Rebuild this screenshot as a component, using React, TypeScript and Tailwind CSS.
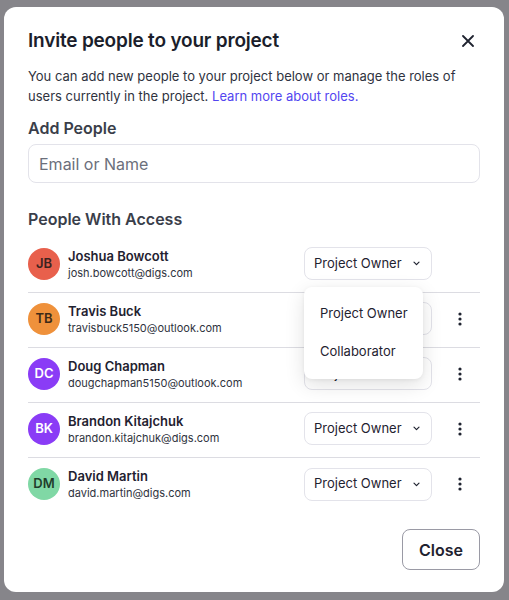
import React from "react";

const people = [
  { initials: "JB", name: "Joshua Bowcott", email: "josh.bowcott@digs.com", bg: "bg-[#e8604c]", fg: "text-[#3b2320]", owner: true },
  { initials: "TB", name: "Travis Buck", email: "travisbuck5150@outlook.com", bg: "bg-[#ef913b]", fg: "text-[#3d2a17]", owner: false },
  { initials: "DC", name: "Doug Chapman", email: "dougchapman5150@outlook.com", bg: "bg-[#8a3cf6]", fg: "text-white", owner: false },
  { initials: "BK", name: "Brandon Kitajchuk", email: "brandon.kitajchuk@digs.com", bg: "bg-[#8a3cf6]", fg: "text-white", owner: false },
  { initials: "DM", name: "David Martin", email: "david.martin@digs.com", bg: "bg-[#80d8a5]", fg: "text-[#1f3d2c]", owner: false },
];

function Chevron() {
  return (
    <svg width="7" height="5" viewBox="0 0 7 5" fill="none">
      <path d="M1 1.2l2.5 2.5L6 1.2" stroke="#1f2330" strokeWidth="1.2" strokeLinecap="round" strokeLinejoin="round" />
    </svg>
  );
}

function Kebab() {
  return (
    <svg width="4" height="14" viewBox="0 0 4 14" fill="#1f2330">
      <circle cx="2" cy="2" r="1.6" />
      <circle cx="2" cy="7" r="1.6" />
      <circle cx="2" cy="12" r="1.6" />
    </svg>
  );
}

export default function App() {
  return (
    <div
      className="min-h-screen w-full bg-[#86858a] pt-[7px] px-[4px]"
      style={{ fontFamily: "Inter, 'Noto Sans', sans-serif" }}
    >
      <div className="relative w-[500px] rounded-xl bg-white px-6 pt-5 pb-[22px]">
        <div className="flex items-center justify-between">
          <h1 className="text-[19px] leading-7 font-semibold text-[#1b1e2b] tracking-[-0.01em]">
            Invite people to your project
          </h1>
          <button className="w-6 h-6 flex items-center justify-center">
            <svg width="12" height="12" viewBox="0 0 12 12" fill="none">
              <path d="M1 1l10 10M11 1L1 11" stroke="#1f2330" strokeWidth="1.8" strokeLinecap="round" />
            </svg>
          </button>
        </div>
        <p className="mt-[11px] text-[13px] leading-5 text-[#2f3340]">
          You can add new people to your project below or manage the roles of users currently in the project.{" "}
          <span className="text-[#5346f0]">Learn more about roles.</span>
        </p>
        <h2 className="mt-[10px] text-[16px] leading-6 font-semibold text-[#3a3e4a]">Add People</h2>
        <div className="mt-1 h-[39px] rounded-lg border border-[#e3e3ea] flex items-center px-[10px]">
          <span className="text-[16px] text-[#6b6f7b]">Email or Name</span>
        </div>
        <h2 className="mt-6 text-[16px] leading-6 font-semibold text-[#3a3e4a]">People With Access</h2>
        <div className="mt-[7px]">
          {people.map((p, i) => (
            <div
              key={p.initials}
              className={`h-[55px] pb-[3px] flex items-center ${i < people.length - 1 ? "border-b border-[#dcdce2]" : ""}`}
            >
              <div className={`w-8 h-8 rounded-full ${p.bg} ${p.fg} flex items-center justify-center text-[13px] font-semibold`}>
                {p.initials}
              </div>
              <div className="ml-2 flex-1">
                <div className="text-[13px] leading-[18px] font-semibold text-[#1f2230]">{p.name}</div>
                <div className="text-[11px] leading-4 text-[#2f3340]">{p.email}</div>
              </div>
              <div className="flex items-center gap-3 pr-1">
                <div className="w-[128px] h-[33px] rounded-lg border border-[#e3e3ea] flex items-center justify-between pl-[9px] pr-[11px]">
                  <span className="text-[13px] text-[#1f2230]">Project Owner</span>
                  <Chevron />
                </div>
                <div className="w-8 h-8 flex items-center justify-center">{p.owner ? null : <Kebab />}</div>
              </div>
            </div>
          ))}
        </div>
        <div className="mt-[16px] flex justify-end">
          <button className="w-[78px] h-[41px] rounded-lg border border-[#9a9aa5] text-[16px] font-semibold text-[#1f2230]">
            Close
          </button>
        </div>

        <div className="absolute left-[300px] top-[280px] w-[119px] rounded-lg bg-white py-2 shadow-[0_6px_20px_rgba(0,0,0,0.12),0_1px_4px_rgba(0,0,0,0.06)]">
          <div className="h-[38px] flex items-center px-4 text-[13px] whitespace-nowrap text-[#1f2230]">Project Owner</div>
          <div className="h-[38px] flex items-center px-4 text-[13px] whitespace-nowrap text-[#1f2230]">Collaborator</div>
        </div>
      </div>
    </div>
  );
}
